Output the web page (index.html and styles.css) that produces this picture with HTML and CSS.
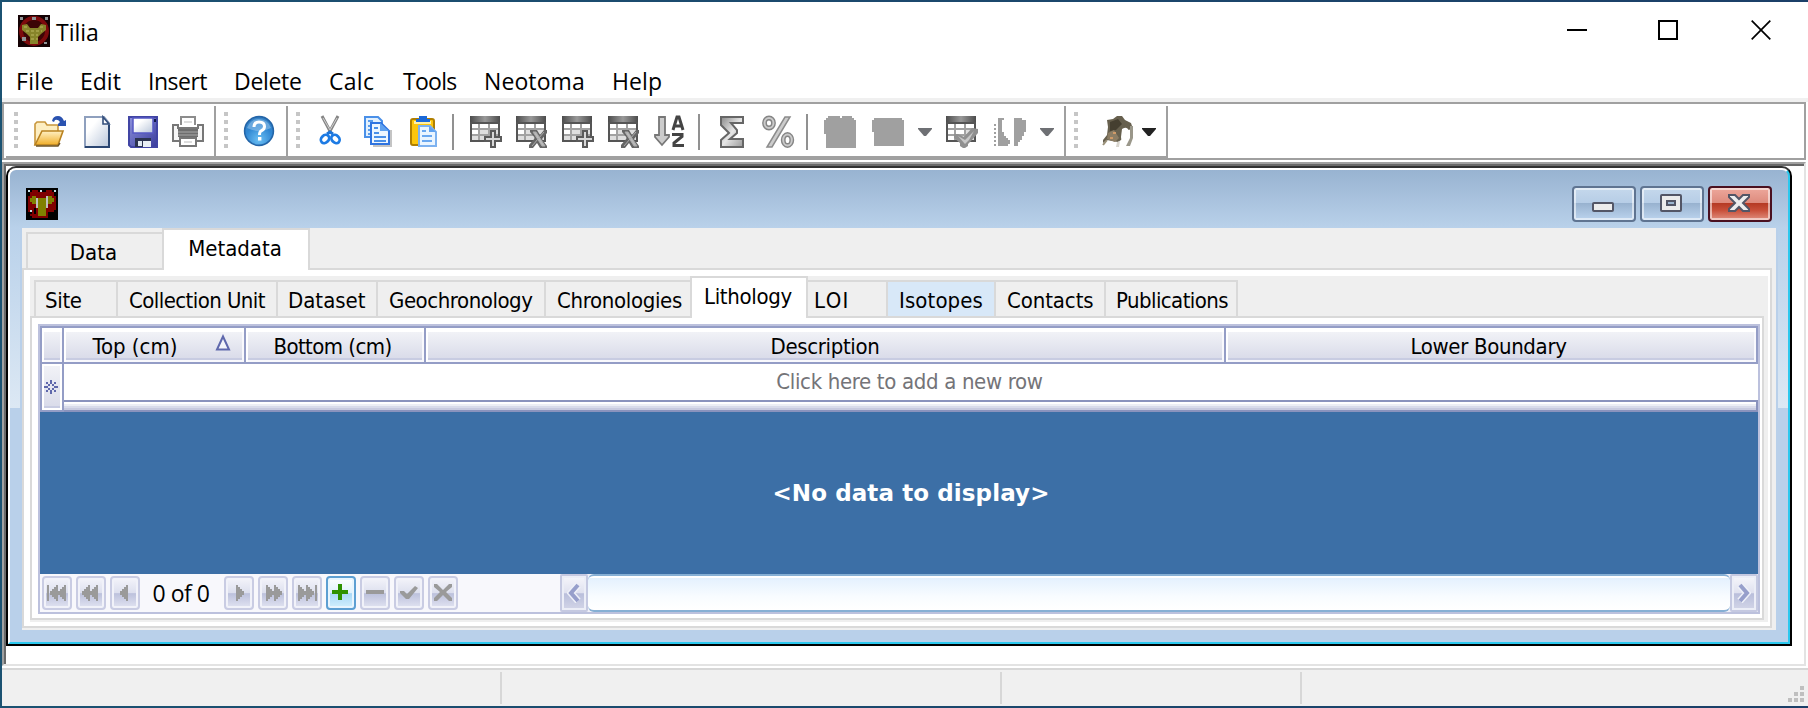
FILE: index.html
```html
<!DOCTYPE html>
<html lang="en">
<head>
<meta charset="utf-8">
<title>Tilia</title>
<link rel="stylesheet" href="styles.css">
</head>
<body>
<svg width="0" height="0" class="defs">
  <defs>
    <linearGradient id="gHead" x1="0" x2="1" y1="0" y2="0"><stop offset="0" stop-color="#4c4c4c"/><stop offset=".5" stop-color="#999"/><stop offset="1" stop-color="#4c4c4c"/></linearGradient>
    <linearGradient id="gFolder" x1="0" x2="0" y1="0" y2="1"><stop offset="0" stop-color="#fff0c4"/><stop offset="1" stop-color="#f0ae28"/></linearGradient>
    <linearGradient id="gPage" x1="0" x2="1" y1="0" y2="1"><stop offset=".3" stop-color="#fff"/><stop offset="1" stop-color="#b9c6da"/></linearGradient>
    <linearGradient id="gDisk" x1="0" x2="1" y1="0" y2="1"><stop offset="0" stop-color="#8d92dc"/><stop offset="1" stop-color="#3a3c9c"/></linearGradient>
    <radialGradient id="gHelp" cx=".5" cy=".8" r=".8"><stop offset="0" stop-color="#6cc0f4"/><stop offset=".6" stop-color="#2f86d2"/><stop offset="1" stop-color="#3a83c4"/></radialGradient>
    <linearGradient id="gGrey" x1="0" x2="1" y1="0" y2="1"><stop offset="0" stop-color="#8a8a8a"/><stop offset=".5" stop-color="#e6e6e6"/><stop offset="1" stop-color="#9a9a9a"/></linearGradient>
    <symbol id="table" viewBox="0 0 32 32">
      <rect x="0" y="0" width="30" height="26" fill="#555"/>
      <rect x="0" y="0" width="30" height="6" fill="url(#gHead)"/>
      <path d="M2 8h26v16H2z" fill="#dedede"/>
      <path d="M2 8h6v4H2zM10 8h8v4h-8zM20 8h8v4h-8zM2 14h6v4H2z" fill="#fff"/>
      <path d="M2 13h26M2 19h26M9 8v16M19 8v16" stroke="#a2a2a2" stroke-width="2"/>
    </symbol>
    <symbol id="tableAdd" viewBox="0 0 32 32">
      <use href="#table" width="32" height="32"/>
      <path d="M20 14h6v6h6v6h-6v6h-6v-6h-6v-6h6z" fill="#5a5a5a"/>
      <path d="M22 16h2v6h6v2h-6v6h-2v-6h-6v-2h6z" fill="#d8d8d8"/>
    </symbol>
    <symbol id="tableDel" viewBox="0 0 32 32">
      <use href="#table" width="32" height="32"/>
      <path d="M14 14h7l3 5 4-5h3v3l-5 6 5 7v2h-7l-3-5-4 5h-4v-3l6-7-5-6z" fill="#666"/>
      <path d="M17 16h3l9 14h-3zM28 16L16 30" fill="#bbb" stroke="#aaa" stroke-width="1"/>
    </symbol>
    <symbol id="caret" viewBox="0 0 14 8"><path d="M0 0h14v1L8 8H6L0 1z"/></symbol>
    <symbol id="tri" viewBox="0 0 8 16"><path d="M8 0v16H6v-2H4v-2H2v-2H0V6h2V4h2V2h2V0z"/></symbol>
  </defs>
</svg>

<div class="app">
  <header class="titlebar">
    <svg class="app-icon" viewBox="0 0 32 32">
      <rect width="32" height="32" fill="#140204"/>
      <circle cx="16" cy="16" r="13" fill="#3c0606" stroke="#7c0a0c" stroke-width="4"/>
      <path d="M4 10l5-1 3 4h8l3-4 5 1v5l-5 4-3 3v7h-8v-7l-3-3-5-4z" fill="#87842a"/>
      <path d="M6 12h4M22 12h4M8 16h16M13 20h7M13 24h7" stroke="#bcb860" stroke-dasharray="3 2"/>
      <path d="M2 2h3v3H2zM14 2h4v3h-4zM27 2h3v3h-3zM4 22h4v4H4zM26 27h3v2h-3z" fill="#8f9496"/>
    </svg>
    <h1 class="title ui">Tilia</h1>
    <div class="win-controls">
      <svg viewBox="0 0 20 20"><path d="M0 10h20" stroke="#000" stroke-width="2"/></svg>
      <svg viewBox="0 0 20 20"><path d="M1 1h18v18H1z" fill="none" stroke="#000" stroke-width="2"/></svg>
      <svg viewBox="0 0 20 20"><path d="M.7.7l18.6 18.6M19.3.7L.7 19.3" stroke="#000" stroke-width="1.7"/></svg>
    </div>
  </header>

  <nav class="menubar ui">
    <span class="m-file">File</span><span class="m-edit">Edit</span><span class="m-insert">Insert</span><span class="m-delete">Delete</span><span class="m-calc">Calc</span><span class="m-tools">Tools</span><span class="m-neotoma">Neotoma</span><span class="m-help">Help</span>
  </nav>

  <div class="toolbar">
    <div class="tgroup end10">
      <i class="grip wide"></i>
      <svg class="ico" viewBox="0 0 32 32">
        <path d="M1 29V8l2-2h8l2 3h11v6" fill="#fdeec2" stroke="#c8963c" stroke-width="1.6"/>
        <path d="M1 29l7-14h21l-5 14z" fill="url(#gFolder)" stroke="#b98220" stroke-width="1.6"/>
        <path d="M2 30h22l2-3" fill="none" stroke="#6d5426" stroke-width="1.4"/>
        <path d="M18 5q1-5 6-5 4 0 6 5l2-1v6h-8V8l2-2q-2-3-5-2l-1 2z" fill="#2a52b0"/>
      </svg>
      <svg class="ico" viewBox="0 0 32 32">
        <path d="M5 1h19l5 6v24H5z" fill="url(#gPage)" stroke="#8fa0be" stroke-width="2"/>
        <path d="M29 9v22H5" fill="none" stroke="#2b4672" stroke-width="2"/>
        <path d="M23 1v7h6z" fill="#fff" stroke="#344f7c" stroke-width="1.6"/>
      </svg>
      <svg class="ico" viewBox="0 0 32 32">
        <path d="M3 1h28v30H5l-2-2z" fill="url(#gDisk)" stroke="#4145a4" stroke-width="2"/>
        <path d="M7 2h20v15H7z" fill="url(#gPage)" stroke="#5558c4" stroke-width="1.5"/>
        <path d="M9 22h16v9H9z" fill="#e8eef4"/><path d="M9 22h16v3h-8v6H9z" fill="#2b3350"/><path d="M12 25h4v5h-4z" fill="#dfe8f2"/>
        <path d="M28 3h2v3h-2z" fill="#101848"/>
      </svg>
      <svg class="ico" viewBox="0 0 32 32">
        <path d="M9 9V1h14v8" fill="#fff" stroke="#8c8c8c" stroke-width="2"/>
        <path d="M1 9h5v3h20V9h5v16H1z" fill="#f6f6f6" stroke="#777" stroke-width="2"/>
        <path d="M6 13h20v8H6z" fill="#6e6e6e"/><path d="M6 16h20M6 19h20" stroke="#a8a8a8"/>
        <path d="M8 22h16v8H8z" fill="#fff" stroke="#777" stroke-width="2"/>
        <path d="M12 6h8M12 26h8" stroke="#ddd" stroke-width="2"/>
      </svg>
    </div>
    <div class="tgroup end12">
      <i class="grip"></i>
      <svg class="ico" viewBox="0 0 32 32">
        <circle cx="17" cy="15" r="14.4" fill="url(#gHelp)" stroke="#2465a8" stroke-width="1.6"/>
        <path d="M5 12a12.500 12.500 0 0 1 24 0q-12 6-24 0z" fill="#8fc0ea" opacity=".6"/>
        <path d="M12 11q0-5 5-5 5.500 0 5.500 4.500 0 3-3.500 4.500-1.500.8-1.500 4" fill="none" stroke="#fff" stroke-width="3"/>
        <rect x="16" y="21" width="3.400" height="3.500" fill="#fff"/>
      </svg>
    </div>
    <div class="tgroup end10">
      <i class="grip"></i>
      <svg class="ico" viewBox="0 0 32 32">
        <path d="M8 0l9 17M24 0l-9 17" stroke="#858585" stroke-width="3"/><path d="M9 2l7 12M23 2l-7 12" stroke="#d0d0d0" stroke-width="1"/>
        <path d="M13 18l3-2 3 2" fill="none" stroke="#1d74d8" stroke-width="3"/>
        <ellipse cx="11" cy="23" rx="3.600" ry="4.600" transform="rotate(45 11 23)" fill="#fff" stroke="#1d7be4" stroke-width="2.800"/>
        <ellipse cx="21.500" cy="23" rx="3.600" ry="4.600" transform="rotate(-45 21.500 23)" fill="#fff" stroke="#1d7be4" stroke-width="2.800"/>
      </svg>
      <svg class="ico" viewBox="0 0 32 32">
        <path d="M5 1h13l4 4v16H5z" fill="#e2f0fd" stroke="#4a90e8" stroke-width="2"/>
        <path d="M8 5h5M8 10h4M8 14h4M8 18h4" stroke="#5a9cec" stroke-width="2"/>
        <path d="M13 30h18V14" fill="none" stroke="#c4c4c4" stroke-width="2"/>
        <path d="M11 7h10l8 8v13H11z" fill="#edf6ff" stroke="#2f74e0" stroke-width="2"/>
        <path d="M20 7l9 8h-9z" fill="#5fa2f0"/>
        <path d="M14 12h4M14 17h5M14 21h12M14 25h12" stroke="#4a90e8" stroke-width="2"/>
      </svg>
      <svg class="ico" viewBox="0 0 32 32">
        <rect x="5" y="3" width="23" height="26" rx="2" fill="#fcc60e" stroke="#b07f00" stroke-width="2"/>
        <path d="M8 5h17v3H8z" fill="#fff0a4"/>
        <path d="M13 0h8v3h3v3H10V3h3z" fill="#1a68d8"/>
        <path d="M13 10h11l6 6v14H13z" fill="#eaf5ff" stroke="#7db2f0" stroke-width="2"/>
        <path d="M23 10l7 6h-7z" fill="#5fa2f0"/>
        <path d="M16 15h4M16 20h10M16 25h10" stroke="#6aa8f0" stroke-width="2"/>
      </svg>
      <i class="sep"></i>
      <svg class="ico after"><use href="#tableAdd"/></svg>
      <svg class="ico"><use href="#tableDel"/></svg>
      <svg class="ico"><use href="#tableAdd"/></svg>
      <svg class="ico"><use href="#tableDel"/></svg>
      <svg class="ico" viewBox="0 0 32 32">
        <path d="M5 1h6v18h4v2l-7 8-7-8v-2h4z" fill="#ccc" stroke="#777" stroke-width="1.800"/>
        <path d="M19 14l4-13h2l4 13M21 10h6" fill="none" stroke="#444" stroke-width="3"/>
        <path d="M18 18.500h10v2L20 27v2.500h10" fill="none" stroke="#444" stroke-width="3"/>
      </svg>
      <i class="sep pull"></i>
      <svg class="ico after" viewBox="0 0 32 32">
        <path d="M5 1h22v6H15l6 7v3l-7 6h13v8H5v-7l8-7-8-8z" fill="url(#gGrey)" stroke="#666" stroke-width="2"/>
      </svg>
      <svg class="ico" viewBox="0 0 32 32">
        <path d="M23 1h5L10 31H5z" fill="#ccc" stroke="#8c8c8c" stroke-width="1.500"/>
        <g fill="none"><ellipse cx="7" cy="7" rx="4.500" ry="5" stroke="#858585" stroke-width="4.800"/><ellipse cx="7" cy="7" rx="4.500" ry="5" stroke="#cacaca" stroke-width="2"/>
        <ellipse cx="25.500" cy="24" rx="4.300" ry="5.500" stroke="#858585" stroke-width="4.800"/><ellipse cx="25.500" cy="24" rx="4.300" ry="5.500" stroke="#cacaca" stroke-width="2"/></g>
      </svg>
      <i class="sep pull"></i>
      <svg class="ico after" viewBox="0 0 32 32"><path d="M2 2h2V0h12v2h2V0h10v2h2v2h2v28H2V18H0V4h2z" fill="#a0a0a0"/></svg>
      <svg class="ico after" viewBox="0 0 32 32"><path d="M0 4h2V2h28v2h2v26H2V16H0z" fill="#a0a0a0"/></svg>
      <svg class="caret"><use href="#caret"/></svg>
      <svg class="ico" viewBox="0 0 32 32">
        <use href="#table" width="32" height="32"/>
        <path d="M2 8h6v4H2zM10 8h8v4h-8zM20 8h8v4h-8zM2 14h6v4H2zM10 14h8v4h-8zM2 20h6v4H2z" fill="#fff"/>
        <path d="M8 18h4l6 3 8-9 6 1v4l-7 8-3 3v2l-3 2h-2l-3-2v-3l-6-5z" fill="#909090"/><path d="M12 20l7 4 9-9-5 9-4 4z" fill="#c8c8c8"/>
      </svg>
      <svg class="ico" viewBox="0 0 32 32">
        <path d="M2 8h2v2H2zM2 12h2v2H2zM2 16h2v2H2zM2 20h2v2H2zM2 24h2v2H2zM2 28h2v2H2zM6 2h6v2h-2v12h2v4h2v2h2v2h2v4h-2v2H6zM22 2h8v2h4v12h-2v4h-2v4h-2v2h-2v4h-4z" fill="#a0a0a0"/>
      </svg>
      <svg class="caret after"><use href="#caret"/></svg>
    </div>
    <div class="tgroup end10">
      <i class="grip"></i>
      <svg class="ico mouse" viewBox="0 0 32 32">
        <path d="M5 4l6-1 4-3h5l3 4 6 3 2 6-5 1-5 2 1 6-6 4-6-1-5-1-4 3v-3l4-5 1-8z" fill="#67604e"/>
        <path d="M8 6l8-3 4 5-6 6-6 1z" fill="#453f30"/><path d="M6 17l6-3 5 8-4 4-8-3z" fill="#8c7d64"/>
        <path d="M20 13q7-4 7 5l-1 11q-7 0-7-8z" fill="#fff"/><path d="M28 10h3v12l-3 8h-4l4-8z" fill="#9a978a"/><path d="M15 26l3-1-1 6h-3z" fill="#d9d6cf"/>
        <path d="M1 29l4-5" stroke="#999078" stroke-width="2"/><path d="M11 16h3v2h-3zM8 21h3v2H8z" fill="#cf9a68"/>
      </svg>
      <svg class="caret dark"><use href="#caret"/></svg>
    </div>
  </div>

  <main class="mdi">
    <section class="child">
      <div class="child-in">
        <div class="child-title">
          <svg class="child-icon" viewBox="0 0 16 16" shape-rendering="crispEdges">
            <rect width="16" height="16" fill="#000"/>
            <path d="M3 1h3v1h4V1h3v1h1v2h1v7h-1v1h-1v1h1v1h-1v1H3v-1H2v-1h1v-1H1V4h1V2h1z" fill="#800000"/>
            <path d="M1 1h1v1H1zM7 1h1v1H7zM14 1h1v1h-1zM2 11h1v1H2z" fill="#c8e0e8"/>
            <path d="M3 4h2v1h6V4h2v1h1v2h-1v1h-2v1h-1v5H6V9H5V8H3V7H2V5h1z" fill="#808000"/>
            <path d="M5 5h1v5H5zM10 4h1v6h-1z" fill="#c0c0c0"/>
            <path d="M4 10h1v3H4zM11 12h3v3h-3z" fill="#000"/>
          </svg>
          <div class="child-controls">
            <button class="cbtn"><svg viewBox="0 0 22 18"><rect x="1" y="9" width="20" height="8" rx="1" fill="#ececec" stroke="#535666" stroke-width="2"/></svg></button>
            <button class="cbtn"><svg viewBox="0 0 22 18"><rect x="1" y="1" width="20" height="16" rx="1" fill="#ececec" stroke="#535666" stroke-width="2"/><rect x="7" y="7" width="8" height="4" fill="#9db6d0" stroke="#535666" stroke-width="2"/></svg></button>
            <button class="cbtn close"><svg viewBox="0 0 22 18"><path d="M1 1h6l4 4 4-4h6v2l-6 6 6 6v2h-6l-4-4-4 4H1v-2l6-6-6-6z" fill="#eee" stroke="#535666" stroke-width="2"/></svg></button>
          </div>
        </div>

        <div class="client tahoma">
          <div class="tabs outer">
            <div class="tab t-data">Data</div>
            <div class="tab t-meta selected">Metadata</div>
          </div>
          <div class="page outer-page">
            <div class="inner-wrap">
              <div class="tabs inner">
                <div class="tab t-site snug">Site</div>
                <div class="tab t-coll tight">Collection Unit</div>
                <div class="tab t-dset">Dataset</div>
                <div class="tab t-geo">Geochronology</div>
                <div class="tab t-chron snug">Chronologies</div>
                <div class="tab t-lith snug selected">Lithology</div>
                <div class="tab t-loi">LOI</div>
                <div class="tab t-iso hot">Isotopes</div>
                <div class="tab t-cont">Contacts</div>
                <div class="tab t-pub tight">Publications</div>
              </div>
              <div class="page inner-page">
                <div class="grid">
                  <div class="ghead">
                    <div class="gcell"><b></b></div>
                    <div class="gcell"><b class="h-top">Top (cm)<svg class="sort" viewBox="0 0 16 16"><path d="M8 1.500L14 14.500H2z" fill="#f4f5fa" stroke="#5f68ac" stroke-width="2"/></svg></b></div>
                    <div class="gcell"><b class="tight h-bot">Bottom (cm)</b></div>
                    <div class="gcell"><b class="snug">Description</b></div>
                    <div class="gcell"><b class="snug h-low">Lower Boundary</b></div>
                  </div>
                  <div class="newrow">
                    <div class="indicator"><b><svg viewBox="0 0 14 14" shape-rendering="crispEdges"><path d="M6 0h2v4H6zM6 10h2v4H6zM0 6h4v2H0zM10 6h4v2h-4zM2 2h2v2H2zM4 4h2v2H4zM10 2h2v2h-2zM8 4h2v2H8zM2 10h2v2H2zM4 8h2v2H4zM10 10h2v2h-2zM8 8h2v2H8z" fill="#5f68ac"/></svg></b></div>
                    <div class="newright">
                      <div class="hint snug">Click here to add a new row</div>
                      <div class="band"></div>
                    </div>
                  </div>
                  <div class="empty">&lt;No data to display&gt;</div>
                  <div class="gfoot">
                    <button class="nb"><svg viewBox="0 0 20 16"><path d="M0 0h2v16H0z"/><use href="#tri" x="3" width="8" height="16"/><use href="#tri" x="11" width="8" height="16"/></svg></button>
                    <button class="nb"><svg viewBox="0 0 20 16"><use href="#tri" x="1" width="8" height="16"/><use href="#tri" x="9" width="8" height="16"/></svg></button>
                    <button class="nb"><svg viewBox="0 0 20 16"><use href="#tri" x="5" width="8" height="16"/></svg></button>
                    <span class="count ui">0 of 0</span>
                    <button class="nb"><svg class="flip" viewBox="0 0 20 16"><use href="#tri" x="5" width="8" height="16"/></svg></button>
                    <button class="nb"><svg class="flip" viewBox="0 0 20 16"><use href="#tri" x="1" width="8" height="16"/><use href="#tri" x="9" width="8" height="16"/></svg></button>
                    <button class="nb"><svg class="flip" viewBox="0 0 20 16"><path d="M0 0h2v16H0z"/><use href="#tri" x="3" width="8" height="16"/><use href="#tri" x="11" width="8" height="16"/></svg></button>
                    <button class="nb add"><svg viewBox="0 0 20 16"><path d="M8-1h4v6h6v4h-6v6H8V9H2V5h6z" fill="#2f9200"/></svg></button>
                    <button class="nb"><svg viewBox="0 0 20 16"><path d="M1 5h18v4H1z"/></svg></button>
                    <button class="nb"><svg viewBox="0 0 20 16"><path d="M1 6h4l3 3 8-8 3 2-9 11H7L1 8z"/></svg></button>
                    <button class="nb"><svg viewBox="0 0 20 16"><path d="M1-1h3l6 6 6-6h3v3l-6 5 6 6v3h-3l-6-6-6 6H1v-3l6-6-6-5z"/></svg></button>
                    <div class="hscroll">
                      <button class="sb"><svg viewBox="0 0 14 20"><path d="M11 2L4 10l7 8" fill="none" stroke="#eef0f8" stroke-width="7"/><path d="M11 2L4 10l7 8" fill="none" stroke="#979fcb" stroke-width="4"/></svg></button>
                      <div class="thumb"></div>
                      <button class="sb"><svg class="flip" viewBox="0 0 14 20"><path d="M11 2L4 10l7 8" fill="none" stroke="#eef0f8" stroke-width="7"/><path d="M11 2L4 10l7 8" fill="none" stroke="#979fcb" stroke-width="4"/></svg></button>
                    </div>
                  </div>
                </div>
              </div>
            </div>
          </div>
        </div>
      </div>
    </section>
  </main>

  <footer class="status">
    <div class="cell s1"></div><div class="cell s2"></div><div class="cell s3"></div>
    <svg class="sizegrip" viewBox="0 0 16 16"><path d="M12 0h4v4h-4zM6 6h4v4H6zM12 6h4v4h-4zM0 12h4v4H0zM6 12h4v4H6zM12 12h4v4h-4z" fill="#bfbfbf"/></svg>
  </footer>
</div>
</body>
</html>
```
FILE: styles.css
```css
* { box-sizing: border-box; }
html, body { margin: 0; }
body {
  width: 1808px; height: 708px; overflow: hidden;
  padding: 2px 0 2px 2px;
  background: linear-gradient(90deg, #1b5272, #1b3f68);
  color: #000;
}
button { padding: 0; margin: 0; font: inherit; }
svg { display: block; flex: none; }
.defs { position: absolute; }
.ui { font: 23px/30px "Open Sans", "Noto Sans", sans-serif; }
.tahoma { font: 22px/28px "DejaVu Sans Condensed", "DejaVu Sans", sans-serif; }
.snug { letter-spacing: -.34px; }
.tight { letter-spacing: -.57px; }

.app { display: flex; flex-direction: column; height: 704px; background: #fff; }

/* Title bar */
.titlebar { display: flex; align-items: center; height: 60px; padding-left: 16px; }
.app-icon { width: 32px; height: 32px; margin-top: -2px; }
.title { margin: 0 0 0 6px; font-weight: 400; }
.win-controls { display: flex; gap: 71px; margin: -4px 37px 0 auto; }
.win-controls svg { width: 20px; height: 20px; }
.win-controls svg:last-child { margin-left: 2px; }

/* Menu */
.menubar { display: flex; height: 40px; padding: 4px 0 0 14px; border-bottom: 4px solid #f0f0f0; white-space: nowrap; }
.m-file { width: 64px; letter-spacing: .3px; }
.m-edit { width: 68px; }
.m-insert { width: 86px; letter-spacing: -.5px; }
.m-delete { width: 95px; letter-spacing: -.3px; }
.m-calc { width: 74px; letter-spacing: .3px; }
.m-tools { width: 81px; letter-spacing: -.7px; }
.m-neotoma { width: 128px; letter-spacing: .1px; }
.m-help { letter-spacing: .1px; }

/* Toolbar */
.toolbar {
  display: flex; width: 1804px; height: 58px; padding: 2px 0 0 2px;
  border: 2px solid #a0a0a0;
}
.tgroup {
  display: flex; align-items: center; gap: 14px; height: 52px;
  padding: 2px 0 0 8px; border: solid #a0a0a0; border-width: 0 2px 2px 0;
}
.end10 { padding-right: 10px; }
.end12 { padding-right: 12px; }
.grip {
  width: 4px; height: 36px; margin-top: -4px;
  background: repeating-linear-gradient(#c6c6c6 0 4px, transparent 4px 8px);
}
.grip.wide { margin-right: 2px; }
.ico { width: 32px; height: 32px; overflow: visible; }
.after { margin-left: 2px; }
.sep { width: 2px; height: 36px; background: #919191; }
.sep.pull { margin-left: -2px; }
.caret { width: 14px; height: 8px; fill: #6e7074; }
.caret.dark { margin-left: -6px; fill: #222; }
.mouse { margin-left: 10px; }

/* MDI area and child window */
.mdi {
  width: 1804px; height: 504px; margin-top: 2px;
  border: 2px solid; border-color: #a0a0a0 #e3e3e3 #e3e3e3 #a0a0a0;
  box-shadow: inset 2px 2px #696969; padding: 2px 0 0 2px;
}
.child {
  width: 1786px; height: 480px; border: 2px solid #000; border-top-color: #333;
  border-radius: 10px 10px 0 0; background: #333;
}
.child-in {
  height: 476px; border: 2px solid; border-color: #fff #2bc8ee #2bc8ee #fff;
  border-radius: 8px 8px 0 0;
  background:
    linear-gradient(#b9d1ea, #dce8f4) 0 58px / 10px 180px no-repeat,
    linear-gradient(#b9d1ea, #dce8f4) 100% 58px / 10px 180px no-repeat,
    linear-gradient(#98b3d1, #b9d1ea) 0 0 / 100% 58px no-repeat,
    #b9d0ea;
}
.child-title { display: flex; justify-content: space-between; height: 58px; padding: 16px 16px 0; }
.child-icon { width: 32px; height: 32px; margin-top: 2px; }
.child-controls { display: flex; gap: 4px; }
.cbtn {
  display: grid; place-items: center; width: 64px; height: 36px;
  border: 2px solid #5f7491; border-radius: 4px;
  box-shadow: inset 0 0 0 2px rgba(255,255,255,.55);
  background: linear-gradient(#c5d8ec, #b6cde6 48%, #98b2cf 48%, #bcd4ee);
}
.cbtn svg { width: 22px; height: 18px; margin: -2px 2px 0 0; }
.cbtn.close {
  border-color: #4a1020;
  background: linear-gradient(#eda89c, #dd8a7c 48%, #b53a24 48%, #c8503a 70%, #e09080);
}

/* Tabs */
.client { width: 1754px; height: 402px; margin-left: 12px; background: #efefef; }
.tabs { display: flex; align-items: flex-end; height: 40px; padding-left: 4px; white-space: nowrap; }
.tab { height: 36px; border: solid #d9d9d9; border-width: 2px 0 0 2px; background: #efefef; }
.tab.selected { position: relative; height: 42px; margin-bottom: -2px; border-right-width: 2px; background: #fff; }
.page { border: 2px solid #d9d9d9; background: #fff; }
.outer .tab { text-align: center; padding-top: 5px; }
.outer .t-data { width: 136px; padding-right: 3px; }
.outer .t-meta { width: 148px; padding-right: 2px; }
.outer-page { width: 1750px; height: 360px; padding: 6px 0 0 6px; }
.inner-wrap { width: 1738px; height: 346px; background: #efefef; }
.inner .tab { padding-top: 5px; }
.inner .t-site { width: 82px; padding-left: 9px; }
.t-coll { width: 160px; padding-left: 11px; }
.t-dset { width: 100px; padding-left: 10px; }
.t-geo { width: 168px; padding-left: 11px; letter-spacing: -.45px; }
.t-chron { width: 146px; padding-left: 11px; }
.t-lith { width: 118px; padding-left: 12px; }
.inner .t-loi { width: 78px; padding-left: 6px; border-left-width: 0; letter-spacing: 1.4px; }
.t-iso { width: 108px; padding-left: 11px; letter-spacing: .1px; }
.t-cont { width: 110px; padding-left: 11px; letter-spacing: -.1px; }
.t-pub { width: 134px; padding-left: 10px; }
.inner .t-pub { border-right-width: 2px; }
.tab.hot { background: #d8e8f8; }
.inner-page { width: 1734px; height: 304px; padding: 6px 0 0 6px; }

/* Data grid */
.grid { width: 1722px; height: 290px; border: 2px solid #bcc1dd; background: #fff; }
.ghead {
  display: grid; grid-template-columns: 22px 182px 180px 800px 534px; height: 38px;
  border: solid #949dc6; border-width: 2px 0;
}
.gcell { border-left: 2px solid #949dc6; padding: 4px 2px 2px; background: #f9f9fd; box-shadow: inset 2px 4px #fff; }
.gcell:last-child { border-right: 2px solid #949dc6; }
.gcell b {
  position: relative; display: block; height: 28px; padding-top: 1px; line-height: 27px; font-weight: 400; text-align: center;
  background: linear-gradient(#f1f2f7, #dadcea); border-bottom: 2px solid #c8cce2;
}
.gcell .h-top { padding-right: 38px; }
.gcell .h-bot { padding-right: 5px; }
.gcell .h-low { padding-right: 5px; }
.sort { position: absolute; right: 11px; top: 2px; width: 16px; height: 18px; }
.newrow { display: flex; height: 48px; }
.indicator { width: 24px; border: solid #949dc6; border-width: 0 2px 2px; padding: 2px 2px 0; }
.indicator b { display: grid; place-items: center; height: 42px; padding-top: 2px; background: linear-gradient(#f1f2f7, #dadcea); border-bottom: 2px solid #c8cce2; }
.indicator svg { width: 14px; height: 14px; margin-right: 2px; }
.newright { width: 1694px; }
.hint { height: 38px; padding: 4px 3px 0 0; border-bottom: 2px solid #8a93bd; text-align: center; color: #747478; }
.band {
  height: 10px; border: solid #8a93bd; border-width: 0 2px 2px 0; margin: 0;
  background: linear-gradient(#fff 2px, #eceef5 2px 4px, #d8dbea 4px 6px, #c8cbe0 6px);
}
.empty {
  height: 162px; padding: 67px 0 0 24px; background: #3c6fa6; color: #fff;
  font-family: "DejaVu Sans", sans-serif;
  font-weight: 700; font-size: 23px; text-align: center; letter-spacing: .1px;
}

/* Record navigator */
.gfoot { display: flex; align-items: center; gap: 4px; height: 38px; padding-left: 2px; background: #f8f8fc; }
.nb {
  display: grid; place-items: center; width: 30px; height: 34px;
  border: 2px solid #c9cce3; border-radius: 4px; box-shadow: inset 0 0 0 2px #f1f2f9;
  background: linear-gradient(#f4f4fa, #dcdfee 50%, #bcc1dc 52%, #e2e4f2);
}
.nb svg { width: 20px; height: 16px; overflow: visible; fill: #9a9a9a; }
.flip { transform: scaleX(-1); }
.nb.add {
  border-color: #5d9fd2; box-shadow: inset 0 0 0 2px #e8f5fe;
  background: linear-gradient(#fff, #dff1fc 50%, #a9d8f6 52%, #d2f0fd);
}
.nb.add svg { margin-right: 2px; }
.count { width: 76px; padding-right: 2px; text-align: center; letter-spacing: -.5px; }
.hscroll { display: flex; width: 1198px; height: 38px; margin-left: 98px; background: #f0f0f8; }
.sb {
  display: grid; place-items: center; width: 28px; height: 38px;
  border: 2px solid #c5c9e1; border-radius: 2px; box-shadow: inset 0 0 0 2px #eceef7;
  background: linear-gradient(#f6f6fb, #dfe1ef 50%, #b9bedb 52%, #d3d6e8);
}
.sb svg { width: 14px; height: 20px; }
.thumb {
  width: 1142px; border: solid #86afd4; border-width: 2px 0; border-radius: 6px;
  background: linear-gradient(#fff 2px, #e4f1fe 2px, #f8fcff 60%, #fff);
}

/* Status bar */
.status { display: flex; height: 38px; margin-top: 2px; padding-top: 2px; border-top: 2px solid #d7d7d7; background: #f0f0f0; }
.cell { height: 32px; border-right: 2px solid #d7d7d7; }
.s1 { width: 500px; }
.s2 { width: 500px; }
.s3 { width: 300px; }
.sizegrip { width: 16px; height: 16px; margin: 14px 4px 0 auto; }
```
